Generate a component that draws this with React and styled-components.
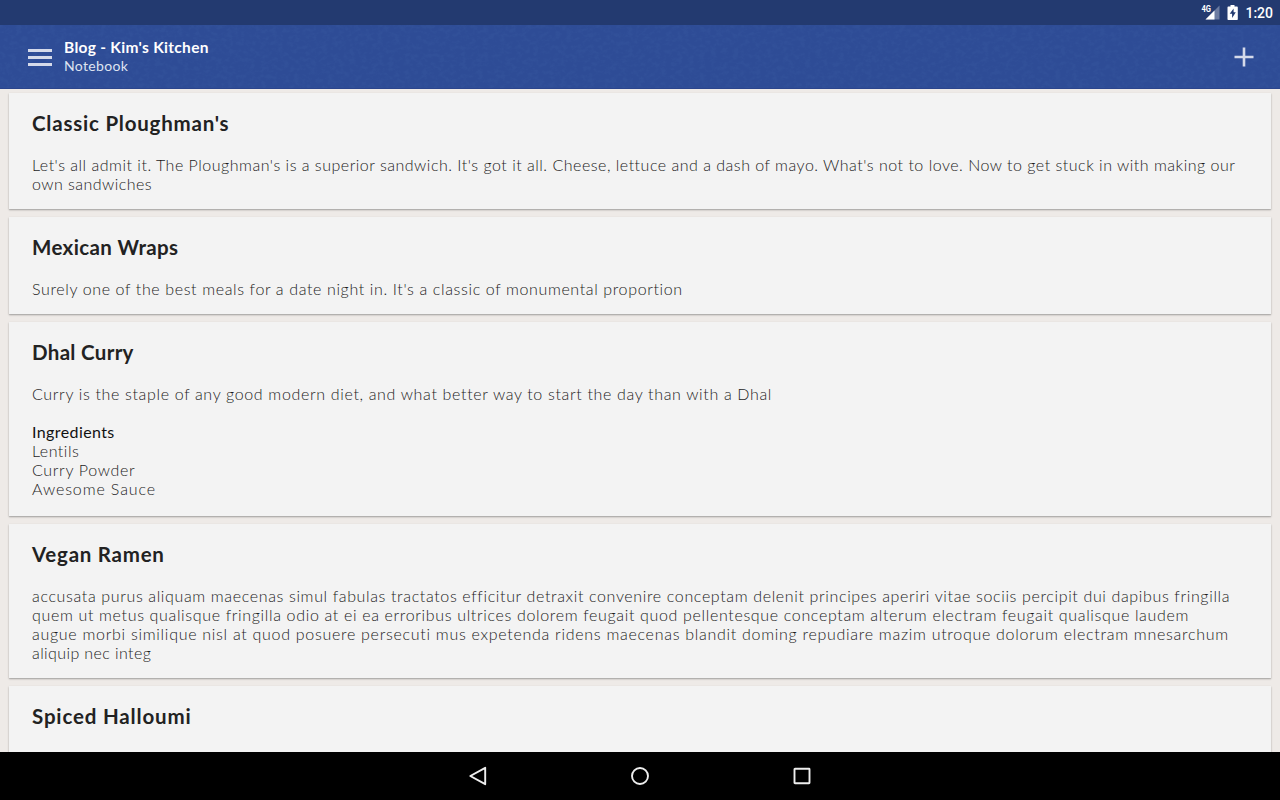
import React from 'react'
import styled, { createGlobalStyle } from 'styled-components';

const GlobalStyle = createGlobalStyle`
    body {
        margin: 0;
        background: #eeeae7;
        font-family: 'Lato', 'Open Sans', sans-serif;
    }
`;

const Screen = styled.div`
    display: flex;
    flex-direction: column;
    width: 1280px;
    height: 800px;
    overflow: hidden;
`;

const StatusBar = styled.div`
    display: flex;
    flex: none;
    align-items: center;
    justify-content: flex-end;
    gap: 7px;
    height: 25px;
    padding-right: 7px;
    box-sizing: border-box;
    background: #233a70;
    color: #fff;

    svg {
        display: block;
    }
`;

const Clock = styled.div`
    padding-top: 1px;
    font: 500 14px/24px 'Roboto', sans-serif;
`;

const Toolbar = styled.header`
    position: relative;
    isolation: isolate;
    display: flex;
    flex: none;
    align-items: center;
    height: 64px;
    padding: 0 24px 0 28px;
    box-sizing: border-box;
    background: #2e4c96;
    border-bottom: 1px solid #2b458c;
    color: #fff;
`;

// woven paper grain behind the toolbar items
const Grain = styled.svg`
    position: absolute;
    inset: 0;
    z-index: -1;
    width: 100%;
    height: 100%;
    opacity: 0.22;
    pointer-events: none;
`;

const Titles = styled.div`
    flex: 1;
    margin-left: 12px;
`;

const Title = styled.div`
    font-size: 15.5px;
    line-height: 19px;
    font-weight: 700;
    letter-spacing: 0.3px;
`;

const Subtitle = styled.div`
    font-size: 14px;
    line-height: 18px;
    letter-spacing: 0.35px;
    color: #dfe4f1;
`;

const MenuIcon = styled.div`
    display: flex;
    flex-direction: column;
    gap: 4px;
    width: 24px;
    padding-top: 1px;

    span {
        height: 3px;
        background: #d5daea;
    }
`;

const List = styled.main`
    display: flex;
    flex: 1;
    flex-direction: column;
    gap: 8px;
    min-height: 0;
    padding: 4px 9px 0;
    overflow: hidden;
`;

const Card = styled.article`
    flex: none;
    padding: 17px 23px ${p => p.$bottom || 16}px;
    background: #f3f3f3;
    box-shadow: 0 1px 1px rgba(0, 0, 0, 0.1), 0 0.5px 2px rgba(0, 0, 0, 0.24);
`;

const Heading = styled.h2`
    margin: 0 0 19px;
    font-size: 20.5px;
    line-height: 26px;
    font-weight: 700;
    letter-spacing: ${p => p.$track}px;
    color: #222;
`;

const Line = styled.div`
    height: 19px;
    line-height: 19px;
    font-size: 16px;
    font-weight: ${p => p.$strong ? 400 : 300};
    letter-spacing: ${p => p.$track}px;
    white-space: pre;
    color: ${p => p.$strong ? '#111' : '#1c1c1c'};
`;

const NavBar = styled.nav`
    display: flex;
    flex: none;
    align-items: center;
    justify-content: center;
    gap: 138px;
    height: 48px;
    background: #000;
`;

const notes = [
    {
        title: "Classic Ploughman's",
        track: 0.78,
        lines: [
            { text: "Let's all admit it. The Ploughman's is a superior sandwich. It's got it all. Cheese, lettuce and a dash of mayo. What's not to love. Now to get stuck in with making our", track: 0.502 },
            { text: 'own sandwiches', track: 0.45 },
        ],
    },
    {
        title: 'Mexican Wraps',
        track: 0.37,
        lines: [
            { text: "Surely one of the best meals for a date night in. It's a classic of monumental proportion", track: 0.63 },
        ],
    },
    {
        title: 'Dhal Curry',
        track: 0.32,
        bottom: 17.5,
        lines: [
            { text: 'Curry is the staple of any good modern diet, and what better way to start the day than with a Dhal', track: 0.66 },
            { text: '' },
            { text: 'Ingredients', track: 0.4, strong: true },
            { text: 'Lentils', track: 0.5 },
            { text: 'Curry Powder', track: 0.67 },
            { text: 'Awesome Sauce', track: 0.88 },
        ],
    },
    {
        title: 'Vegan Ramen',
        track: 0.75,
        lines: [
            { text: 'accusata purus aliquam maecenas simul fabulas tractatos efficitur detraxit convenire conceptam delenit principes aperiri vitae sociis percipit dui dapibus fringilla', track: 0.64 },
            { text: 'quem ut metus qualisque fringilla odio at ei ea erroribus ultrices dolorem feugait quod pellentesque conceptam alterum electram feugait qualisque laudem', track: 0.657 },
            { text: 'augue morbi similique nisl at quod posuere persecuti mus expetenda ridens maecenas blandit doming repudiare mazim utroque dolorum electram mnesarchum', track: 0.715 },
            { text: 'aliquip nec integ', track: 0.4 },
        ],
    },
    {
        title: 'Spiced Halloumi',
        track: 0.83,
        lines: [{ text: '' }],
    },
];

export default class App extends React.Component {

    renderStatusBar = () => {
        return <StatusBar>
            <svg width="19" height="25" viewBox="0 0 19 25">
                <text x="0.5" y="12" fill="#fff" fontFamily="Roboto, sans-serif" fontWeight="700" fontSize="9" textLength="9.5" lengthAdjust="spacingAndGlyphs">4G</text>
                <path d="M18.5 5.5V19.5H4.5z" fill="#6d7ca1" />
                <path d="M13.5 10.5V19.5H4.5z" fill="#fff" />
            </svg>
            <svg width="11" height="25" viewBox="0 0 11 25">
                <path d="M3.5 5h4v1.6H10a.8.8 0 0 1 .8.8v11.8a.8.8 0 0 1-.8.8H1.3a.8.8 0 0 1-.8-.8V7.4a.8.8 0 0 1 .8-.8h2.2z" fill="#fff" />
                <path d="M6.6 8.5L2.7 13.7h2.4v4.2l3.7-5.6H6.6z" fill="#233a70" />
            </svg>
            <Clock>1:20</Clock>
        </StatusBar>
    };

    renderToolbar = () => {
        return <Toolbar>
            <Grain>
                <filter id="grain">
                    <feTurbulence type="fractalNoise" baseFrequency="0.18 0.24" numOctaves="4" seed="4" />
                    <feColorMatrix values="0 0 0 0 0.05  0 0 0 0 0.12  0 0 0 0 0.38  3 0 0 0 -1.25" />
                </filter>
                <rect width="100%" height="100%" filter="url(#grain)" />
            </Grain>
            <MenuIcon><span /><span /><span /></MenuIcon>
            <Titles>
                <Title>Blog - Kim's Kitchen</Title>
                <Subtitle>Notebook</Subtitle>
            </Titles>
            <svg width="24" height="24" viewBox="0 0 24 24">
                <path d="M12 2.5v19M2.5 12h19" stroke="#d5daea" strokeWidth="2.6" />
            </svg>
        </Toolbar>
    };

    renderNote = (note) => {
        return <Card key={note.title} $bottom={note.bottom}>
            <Heading $track={note.track}>{note.title}</Heading>
            {note.lines.map((line, i) => (
                <Line key={i} $track={line.track || 0} $strong={line.strong}>{line.text}</Line>
            ))}
        </Card>
    };

    renderNavBar = () => {
        return <NavBar>
            <svg width="24" height="24" viewBox="0 0 24 24" fill="none" stroke="#eee" strokeWidth="1.9">
                <path d="M19.2 3.8v16.4L4.3 12z" strokeLinejoin="round" />
            </svg>
            <svg width="24" height="24" viewBox="0 0 24 24" fill="none" stroke="#eee" strokeWidth="1.9">
                <circle cx="12" cy="12" r="8" />
            </svg>
            <svg width="24" height="24" viewBox="0 0 24 24" fill="none" stroke="#eee" strokeWidth="1.9">
                <rect x="4.5" y="4.7" width="15" height="14.6" rx="0.5" />
            </svg>
        </NavBar>
    };

    render() {
        return (
            <Screen>
                <GlobalStyle />
                {this.renderStatusBar()}
                {this.renderToolbar()}
                <List>{notes.map(this.renderNote)}</List>
                {this.renderNavBar()}
            </Screen>
        );
    }

}
